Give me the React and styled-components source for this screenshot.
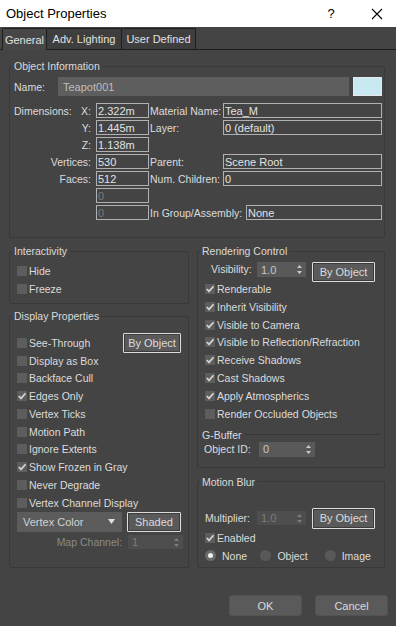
import React from 'react';
import styled, { createGlobalStyle } from 'styled-components';

const GlobalStyle = createGlobalStyle`
  html, body {
    margin: 0;
    padding: 0;
    background: #444444;
  }
  body {
    font-family: "Liberation Sans", Arial, sans-serif;
    font-size: 10.5px;
    color: #dcdcdc;
  }
  * { box-sizing: border-box; }
`

const Window = styled.div`
  width: 396px;
  height: 626px;
  background: #444444;
  overflow: hidden;
  display: flex;
  flex-direction: column;
`

const TitleBar = styled.div`
  height: 27px;
  flex-shrink: 0;
  background: #ffffff;
  color: #000000;
  display: flex;
  align-items: center;
  padding-left: 6px;
  font-size: 13px;
`

const TitleText = styled.span`
  flex: 1;
`

const TitleButton = styled.span`
  width: ${props => props.w}px;
  height: 27px;
  display: flex;
  align-items: center;
  justify-content: center;
  font-size: 13px;
`

const TabBar = styled.div`
  height: 22px;
  margin-top: 1px;
  padding-left: 2px;
  display: flex;
  align-items: flex-end;
  border-bottom: 1px solid #1e1e1e;
`

const Tab = styled.div`
  width: ${props => props.w}px;
  display: flex;
  align-items: center;
  justify-content: center;
  border: 1px solid #1e1e1e;
  border-left: ${props => props.first ? '1px solid #1e1e1e' : 'none'};
  border-bottom: none;
  border-radius: 2px 2px 0 0;
  background: ${props => props.active ? '#474747' : '#3e3e3e'};
  margin-bottom: ${props => props.active ? '-1px' : '0'};
  height: ${props => props.active ? '22px' : '21px'};
  color: #e0e0e0;
  font-size: 11px;
  white-space: nowrap;
`

const Panel = styled.div`
  padding: 0 11px 0 9px;
  display: flex;
  flex-direction: column;
`

const Group = styled.fieldset`
  margin: ${props => props.top || 0}px 0 0 0;
  padding: ${props => props.pt || 5}px 1px ${props => props.pb || 5}px 4px;
  border: 1px solid #393939;
  border-radius: 2px;
  min-width: 0;
  display: flex;
  flex-direction: column;
`

const Legend = styled.legend`
  padding: 0 2px;
  margin-left: -2px;
  line-height: 12px;
  font-size: 10.5px;
  color: #dadada;
`

const NameRow = styled.div`
  display: flex;
  align-items: center;
  height: 19px;
`

const NameLabel = styled.span`
  width: 44px;
`

const NameField = styled.div`
  flex: 1;
  height: 19px;
  background: #5e5e5e;
  color: #bdbdbd;
  display: flex;
  align-items: center;
  padding-left: 5px;
  font-size: 11px;
`

const Swatch = styled.div`
  width: 29px;
  height: 19px;
  margin-left: 4px;
  margin-right: 1px;
  background: #c9e9f2;
  border: 1px solid #e8e8e8;
`

const InfoRows = styled.div`
  display: flex;
  flex-direction: column;
  gap: 2px;
  margin-top: 7px;
`

const InfoRow = styled.div`
  display: flex;
  align-items: center;
  height: 15px;
`

const LeftLabel = styled.span`
  width: 78px;
  margin-right: 4px;
  display: flex;
  justify-content: ${props => props.split ? 'space-between' : 'flex-end'};
  padding-right: 1px;
`

const RightLabel = styled.span`
  width: ${props => props.w || 74}px;
  padding-left: 1px;
  white-space: nowrap;
`

const Field = styled.div`
  width: ${props => props.w ? props.w + 'px' : 'auto'};
  flex: ${props => props.w ? 'none' : '1'};
  height: 15px;
  border: 1px solid #b0b0b0;
  color: ${props => props.disabled ? '#7a7a7a' : '#e2e2e2'};
  display: flex;
  align-items: center;
  padding-left: 1px;
  margin-right: ${props => props.w ? 0 : 1}px;
  font-size: 11px;
`

const Columns = styled.div`
  display: flex;
  gap: 8px;
  margin-top: 7px;
`

const Column = styled.div`
  width: ${props => props.w}px;
  display: flex;
  flex-direction: column;
`

const List = styled.div`
  display: flex;
  flex-direction: column;
  padding-left: 3px;
`

const CheckRow = styled.div`
  height: ${props => props.h}px;
  display: flex;
  align-items: center;
  white-space: nowrap;
`

const BoxMark = styled.span`
  width: 10px;
  height: 10px;
  background: #5d5d5d;
  margin-right: 2px;
  display: flex;
  flex-shrink: 0;
`

const Button = styled.div`
  width: ${props => props.w}px;
  height: ${props => props.h || 20}px;
  margin-left: ${props => props.ml || 0}px;
  background: #5a5a5a;
  border: 1px solid ${props => props.focus ? '#dcdcdc' : '#525252'};
  box-shadow: ${props => props.focus ? 'inset 0 0 0 1px #3c3c3c' : 'none'};
  border-radius: ${props => props.focus ? '1px' : '3px'};
  color: #dadada;
  display: flex;
  align-items: center;
  justify-content: center;
  flex-shrink: 0;
  font-size: 11px;
`

const SpinBox = styled.div`
  width: ${props => props.w}px;
  height: ${props => props.h || 15}px;
  background: ${props => props.disabled ? '#4e4e4e' : '#595959'};
  color: ${props => props.disabled ? '#7c7c7c' : '#c8c8c8'};
  display: flex;
  align-items: center;
  justify-content: space-between;
  padding: 0 4px 0 4px;
  flex-shrink: 0;
  font-size: 11px;
`

const SpinLabel = styled.span`
  width: ${props => props.w}px;
  margin-left: ${props => props.ml || 0}px;
  color: ${props => props.disabled ? '#8a8a8a' : '#dcdcdc'};
  text-align: ${props => props.right ? 'right' : 'left'};
  padding-right: ${props => props.right ? 6 : 0}px;
  line-height: 15px;
  white-space: nowrap;
  flex-shrink: 0;
`

const ButtonRow = styled.div`
  display: flex;
  align-items: ${props => props.top ? 'flex-start' : 'center'};
  height: ${props => props.h}px;
`

const SeeRow = styled(CheckRow)`
  justify-content: space-between;
  padding-right: 6px;
`

const CheckPart = styled.span`
  display: flex;
  align-items: center;
`

const Dropdown = styled.div`
  width: 105px;
  height: 20px;
  background: #5c5c5c;
  color: #d2d2d2;
  display: flex;
  align-items: center;
  justify-content: space-between;
  padding: 0 7px 0 6px;
  font-size: 11px;
`

const MapRow = styled.div`
  display: flex;
  align-items: center;
  height: 14px;
  margin-top: 3.5px;
`

const SubHeader = styled.div`
  display: flex;
  align-items: center;
  gap: 3px;
  height: 12px;
  margin-top: 6px;
  padding-right: 3px;
`

const SubLine = styled.div`
  flex: 1;
  height: 1px;
  background: #363636;
`

const ObjIdRow = styled.div`
  display: flex;
  align-items: center;
  height: 15px;
  margin-top: 1px;
  padding-left: 2px;
`

const RadioRow = styled.div`
  height: 18px;
  display: flex;
  align-items: center;
`

const RadioItem = styled.span`
  display: flex;
  align-items: center;
  width: ${props => props.w}px;
`

const RadioDot = styled.span`
  width: 11px;
  height: 11px;
  border-radius: 50%;
  background: ${props => props.on ? '#6a6a6a' : '#595959'};
  margin-right: 6px;
  display: flex;
  align-items: center;
  justify-content: center;
  &::after {
    content: '';
    width: 5px;
    height: 5px;
    border-radius: 50%;
    background: ${props => props.on ? '#f0f0f0' : 'transparent'};
  }
`

const Footer = styled.div`
  display: flex;
  justify-content: flex-end;
  gap: 13px;
  margin: 27px -3px 0 0;
`

const CloseIcon = () => (
  <svg width="12" height="12" viewBox="0 0 12 12">
    <path d="M1 1 L11 11 M11 1 L1 11" stroke="#000" strokeWidth="1.1" />
  </svg>
)

const Check = ({ on }) => (
  <BoxMark>
    {on && (
      <svg width="10" height="10" viewBox="0 0 10 10">
        <polyline points="1.8,5 4,7.4 8.6,2.2" fill="none" stroke="#d4d4d4" strokeWidth="1.7" />
      </svg>
    )}
  </BoxMark>
)

const Arrows = () => (
  <svg width="5" height="9" viewBox="0 0 5 9">
    <path d="M2.5 0 L5 3 L0 3 Z M0 6 L5 6 L2.5 9 Z" fill="currentColor" />
  </svg>
)

const DownArrow = () => (
  <svg width="7" height="5" viewBox="0 0 7 5">
    <path d="M0 0 L7 0 L3.5 5 Z" fill="#e0e0e0" />
  </svg>
)

const CheckItem = ({ on, label, h }) => (
  <CheckRow h={h}>
    <Check on={on} />
    <span>{label}</span>
  </CheckRow>
)

const displayItems = [
  ['Display as Box', false],
  ['Backface Cull', false],
  ['Edges Only', true],
  ['Vertex Ticks', false],
  ['Motion Path', false],
  ['Ignore Extents', false],
  ['Show Frozen in Gray', true],
  ['Never Degrade', false],
  ['Vertex Channel Display', false],
]

const renderItems = [
  ['Renderable', true],
  ['Inherit Visibility', true],
  ['Visible to Camera', true],
  ['Visible to Reflection/Refraction', true],
  ['Receive Shadows', true],
  ['Cast Shadows', true],
  ['Apply Atmospherics', true],
  ['Render Occluded Objects', false],
]

const App = () => {
  return (
    <Window>
      <GlobalStyle />
      <TitleBar>
        <TitleText>Object Properties</TitleText>
        <TitleButton w={54}>?</TitleButton>
        <TitleButton w={38}><CloseIcon /></TitleButton>
      </TitleBar>

      <TabBar>
        <Tab active first w={45}>General</Tab>
        <Tab w={75}>Adv. Lighting</Tab>
        <Tab w={74}>User Defined</Tab>
      </TabBar>

      <Panel>
        <Group top={10} pt={5} pb={17}>
          <Legend>Object Information</Legend>
          <NameRow>
            <NameLabel>Name:</NameLabel>
            <NameField>Teapot001</NameField>
            <Swatch />
          </NameRow>
          <InfoRows>
            <InfoRow>
              <LeftLabel split><span>Dimensions:</span><span>X:</span></LeftLabel>
              <Field w={53}>2.322m</Field>
              <RightLabel>Material Name:</RightLabel>
              <Field>Tea_M</Field>
            </InfoRow>
            <InfoRow>
              <LeftLabel>Y:</LeftLabel>
              <Field w={53}>1.445m</Field>
              <RightLabel>Layer:</RightLabel>
              <Field>0 (default)</Field>
            </InfoRow>
            <InfoRow>
              <LeftLabel>Z:</LeftLabel>
              <Field w={53}>1.138m</Field>
            </InfoRow>
            <InfoRow>
              <LeftLabel>Vertices:</LeftLabel>
              <Field w={53}>530</Field>
              <RightLabel>Parent:</RightLabel>
              <Field>Scene Root</Field>
            </InfoRow>
            <InfoRow>
              <LeftLabel>Faces:</LeftLabel>
              <Field w={53}>512</Field>
              <RightLabel>Num. Children:</RightLabel>
              <Field>0</Field>
            </InfoRow>
            <InfoRow>
              <LeftLabel />
              <Field w={53} disabled>0</Field>
            </InfoRow>
            <InfoRow>
              <LeftLabel />
              <Field w={53} disabled>0</Field>
              <RightLabel w={97}>In Group/Assembly:</RightLabel>
              <Field>None</Field>
            </InfoRow>
          </InfoRows>
        </Group>

        <Columns>
          <Column w={180}>
            <Group pt={5} pb={5}>
              <Legend>Interactivity</Legend>
              <List>
                <CheckItem h={18} label="Hide" />
                <CheckItem h={18} label="Freeze" />
              </List>
            </Group>

            <Group top={6} pt={12} pb={18}>
              <Legend>Display Properties</Legend>
              <List>
                <SeeRow h={17.75}>
                  <CheckPart><Check /><span>See-Through</span></CheckPart>
                  <Button w={58} h={20} focus>By Object</Button>
                </SeeRow>
                {displayItems.map(([label, on]) => (
                  <CheckItem key={label} h={17.75} label={label} on={on} />
                ))}
                <ButtonRow h={20}>
                  <Dropdown>
                    <span>Vertex Color</span>
                    <DownArrow />
                  </Dropdown>
                  <Button w={54} h={20} ml={5} focus>Shaded</Button>
                </ButtonRow>
              </List>
              <MapRow>
                <SpinLabel w={114} right disabled>Map Channel:</SpinLabel>
                <SpinBox w={55} h={14} disabled>
                  <span>1</span>
                  <Arrows />
                </SpinBox>
              </MapRow>
            </Group>
          </Column>

          <Column w={188}>
            <Group pt={5} pb={10}>
              <Legend>Rendering Control</Legend>
              <ButtonRow h={18} top>
                <SpinLabel w={46} ml={9}>Visibility:</SpinLabel>
                <SpinBox w={49}>
                  <span>1.0</span>
                  <Arrows />
                </SpinBox>
                <Button w={63} h={20} ml={6} focus>By Object</Button>
              </ButtonRow>
              <List>
                {renderItems.map(([label, on]) => (
                  <CheckItem key={label} h={17.85} label={label} on={on} />
                ))}
              </List>
              <SubHeader>
                <span>G-Buffer</span>
                <SubLine />
              </SubHeader>
              <ObjIdRow>
                <SpinLabel w={55}>Object ID:</SpinLabel>
                <SpinBox w={56}>
                  <span>0</span>
                  <Arrows />
                </SpinBox>
              </ObjIdRow>
            </Group>

            <Group top={8} pt={20} pb={2}>
              <Legend>Motion Blur</Legend>
              <ButtonRow h={21}>
                <SpinLabel w={52} ml={3}>Multiplier:</SpinLabel>
                <SpinBox w={49} h={14} disabled>
                  <span>1.0</span>
                  <Arrows />
                </SpinBox>
                <Button w={63} h={21} ml={6} focus>By Object</Button>
              </ButtonRow>
              <List>
                <CheckItem h={18} label="Enabled" on />
                <RadioRow>
                  <RadioItem w={57}><RadioDot on /><span>None</span></RadioItem>
                  <RadioItem w={66}><RadioDot /><span>Object</span></RadioItem>
                  <RadioItem w={60}><RadioDot /><span>Image</span></RadioItem>
                </RadioRow>
              </List>
            </Group>
          </Column>
        </Columns>

        <Footer>
          <Button w={73} h={21}>OK</Button>
          <Button w={73} h={21}>Cancel</Button>
        </Footer>
      </Panel>
    </Window>
  )
}

export default App
